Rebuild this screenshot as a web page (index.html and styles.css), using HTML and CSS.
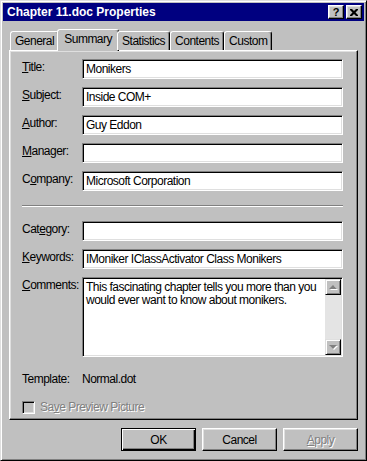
FILE: index.html
```html
<!DOCTYPE html>
<html lang="en">

<head>
    <meta charset="UTF-8">
    <meta name="viewport" content="width=device-width, initial-scale=1.0">
    <title>Chapter 11.doc Properties</title>
    <link rel="stylesheet" href="styles.css">
</head>

<body>
    <div class="window">
        <div class="titlebar">
            <span class="title">Chapter 11.doc Properties</span>
            <div class="caption-buttons">
                <div class="cap-btn">?</div>
                <div class="cap-btn">
                    <svg width="8" height="7" viewBox="0 0 8 7">
                        <path d="M0 0h2l2 2 2-2h2v1l-2.5 2.5L8 6v1H6L4 5 2 7H0V6l2.5-2.5L0 1z" fill="#000" />
                    </svg>
                </div>
            </div>
        </div>

        <div class="content">
            <div class="tabs">
                <div class="tab">General</div>
                <div class="tab active">Summary</div>
                <div class="tab">Statistics</div>
                <div class="tab">Contents</div>
                <div class="tab">Custom</div>
            </div>

            <div class="panel">
                <div class="fields">
                    <label><u>T</u>itle:</label>
                    <div class="field">Monikers</div>
                    <label><u>S</u>ubject:</label>
                    <div class="field">Inside COM+</div>
                    <label><u>A</u>uthor:</label>
                    <div class="field">Guy Eddon</div>
                    <label><u>M</u>anager:</label>
                    <div class="field"></div>
                    <label>C<u>o</u>mpany:</label>
                    <div class="field">Microsoft Corporation</div>
                </div>

                <hr class="separator">

                <div class="fields">
                    <label>Cat<u>e</u>gory:</label>
                    <div class="field"></div>
                    <label><u>K</u>eywords:</label>
                    <div class="field">IMoniker IClassActivator Class Monikers</div>
                    <label><u>C</u>omments:</label>
                    <div class="field memo">
                        <div class="memo-text">This fascinating chapter tells you more than you would ever want to know about monikers.</div>
                        <div class="scrollbar">
                            <div class="scroll-btn"><span class="arrow up"></span></div>
                            <div class="scroll-track"></div>
                            <div class="scroll-btn"><span class="arrow down"></span></div>
                        </div>
                    </div>
                </div>

                <div class="template-row">
                    <span class="template-label">Template:</span>
                    <span>Normal.dot</span>
                </div>

                <div class="check-row">
                    <span class="checkbox"></span>
                    <span class="disabled">Sa<u>v</u>e Preview Picture</span>
                </div>
            </div>

            <div class="buttons">
                <div class="button default">OK</div>
                <div class="button">Cancel</div>
                <div class="button"><span class="disabled"><u>A</u>pply</span></div>
            </div>
        </div>
    </div>
</body>

</html>
```

FILE: styles.css
```css
* {
    box-sizing: border-box;
}

body {
    margin: 0;
    font-family: "Liberation Sans", Arial, sans-serif;
    font-size: 12px;
    letter-spacing: -0.5px;
    color: #000;
    background-color: #c0c0c0;
}

.window {
    width: 367px;
    height: 461px;
    padding: 2px;
    background-color: #c0c0c0;
    border: 1px solid;
    border-color: #dfdfdf #000 #000 #dfdfdf;
    box-shadow: inset 1px 1px #fff, inset -1px -1px #808080;
}

/* title bar */

.titlebar {
    height: 18px;
    display: flex;
    align-items: center;
    justify-content: space-between;
    padding: 0 2px 0 4px;
    background-color: #000080;
    color: white;
}

.title {
    font-weight: bold;
    font-size: 12px;
    letter-spacing: 0;
}

.caption-buttons {
    display: flex;
    gap: 2px;
}

.cap-btn {
    width: 16px;
    height: 14px;
    display: flex;
    align-items: center;
    justify-content: center;
    background-color: #c0c0c0;
    color: black;
    font-weight: bold;
    font-size: 11px;
    letter-spacing: 0;
    border: 1px solid;
    border-color: #fff #000 #000 #fff;
    box-shadow: inset -1px -1px #808080, inset 1px 1px #dfdfdf;
}

/* tabs */

.content {
    padding: 8px 6px 0;
}

.tabs {
    display: flex;
    align-items: flex-end;
    height: 21px;
    padding-left: 1px;
    position: relative;
    z-index: 1;
}

.tab {
    height: 19px;
    padding: 2px 4px 0;
    border: 1px solid;
    border-bottom: none;
    border-color: #fff #000 transparent #fff;
    border-radius: 3px 3px 0 0;
    box-shadow: inset -1px 0 #808080;
    background-color: #c0c0c0;
}

.tab.active {
    height: 22px;
    margin: 0 -2px -1px;
    padding: 2px 6px 0;
}

/* panel */

.panel {
    height: 370px;
    padding: 8px 14px 0 12px;
    border: 1px solid;
    border-color: #fff #000 #000 #fff;
    box-shadow: inset -1px -1px #808080, inset 1px 1px #dfdfdf;
}

.fields {
    display: grid;
    grid-template-columns: 60px 1fr;
    row-gap: 8px;
}

.fields label {
    line-height: 16px;
}

.field {
    height: 20px;
    padding: 0 3px;
    line-height: 18px;
    background-color: white;
    border: 1px solid;
    border-color: #808080 #fff #fff #808080;
    box-shadow: inset 1px 1px #000, inset -1px -1px #dfdfdf;
    white-space: nowrap;
    overflow: hidden;
}

.fields .memo {
    height: 80px;
    display: flex;
    padding: 1px;
    white-space: normal;
}

.memo-text {
    flex: 1;
    padding: 2px 4px 0 2px;
    line-height: 13px;
}

.scrollbar {
    width: 16px;
    display: flex;
    flex-direction: column;
}

.scroll-track {
    flex: 1;
    background-color: #e4e4e4;
}

.scroll-btn {
    height: 16px;
    display: flex;
    align-items: center;
    justify-content: center;
    background-color: #c0c0c0;
    border: 1px solid;
    border-color: #dfdfdf #000 #000 #dfdfdf;
    box-shadow: inset 1px 1px #fff, inset -1px -1px #808080;
}

.arrow {
    width: 0;
    height: 0;
    border-left: 4px solid transparent;
    border-right: 4px solid transparent;
}

.arrow.up {
    border-bottom: 4px solid #808080;
    filter: drop-shadow(1px 1px 0 #fff);
}

.arrow.down {
    border-top: 4px solid #808080;
    filter: drop-shadow(1px 1px 0 #fff);
}

.separator {
    height: 2px;
    margin: 14px 0 14px;
    border: none;
    border-top: 1px solid #808080;
    border-bottom: 1px solid #fff;
}

.template-row {
    display: flex;
    margin-top: 15px;
    line-height: 14px;
}

.template-label {
    width: 60px;
}

.check-row {
    display: flex;
    align-items: center;
    gap: 5px;
    margin-top: 14px;
}

.checkbox {
    width: 13px;
    height: 13px;
    border: 1px solid;
    border-color: #808080 #fff #fff #808080;
    box-shadow: inset 1px 1px #000, inset -1px -1px #dfdfdf;
    background-color: #c0c0c0;
}

.disabled {
    color: #808080;
    text-shadow: 1px 1px 0 #fff;
}

/* dialog buttons */

.buttons {
    display: flex;
    justify-content: flex-end;
    gap: 6px;
    margin-top: 8px;
}

.button {
    width: 75px;
    height: 23px;
    display: flex;
    align-items: center;
    justify-content: center;
    border: 1px solid;
    border-color: #fff #000 #000 #fff;
    box-shadow: inset -1px -1px #808080, inset 1px 1px #dfdfdf;
}

.button.default {
    border-color: #000;
    box-shadow: inset 1px 1px #fff, inset -1px -1px #000, inset -2px -2px #808080;
}
```
